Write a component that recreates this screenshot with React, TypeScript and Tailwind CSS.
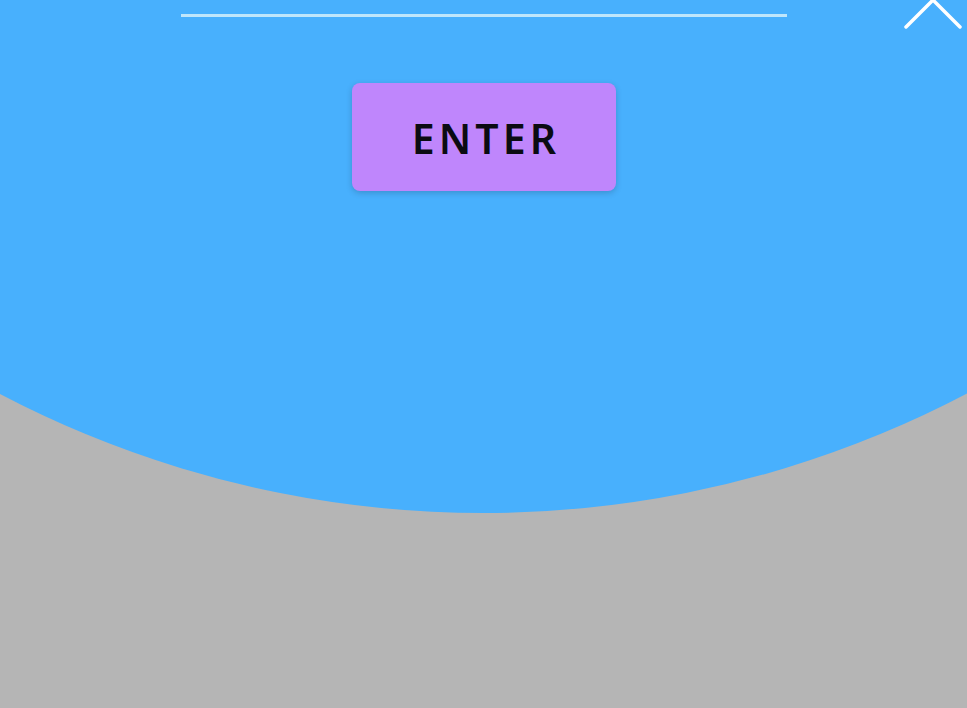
import React from 'react';

export default function App() {
    return (
        <div className="relative h-[708px] w-full overflow-hidden bg-[#b5b5b5]" style={{ fontFamily: '"Noto Sans", "Open Sans", sans-serif' }}>
            {/* big blue disc, only its lower arc shows */}
            <div className="absolute left-[-557px] top-[-1567px] h-[2080px] w-[2080px] rounded-full bg-[#48b0fd]" />

            <div className="relative flex flex-col items-center">
                <div className="mt-[14px] flex h-[15px] w-full items-start">
                    <div className="ml-[181px] h-[3px] w-[606px] bg-[#bfe6fb]" />
                    <svg className="ml-auto mr-[5px] mt-[-17px] shrink-0" width="58" height="32" viewBox="0 0 58 32" fill="none">
                        <path d="M2 30 L29 3 L56 30" stroke="white" strokeWidth="3.5" strokeLinecap="round" strokeLinejoin="round" />
                    </svg>
                </div>

                <button className="mt-[54px] ml-[1px] flex h-[108px] w-[264px] items-center justify-center rounded-lg bg-[#bf86fc] pl-[4px] pt-[3px] text-[41px] font-semibold tracking-[0.1em] text-[#0b0b12] shadow-[0_2px_6px_rgba(0,0,0,0.18)]">
                    ENTER
                </button>
            </div>
        </div>
    );
}
